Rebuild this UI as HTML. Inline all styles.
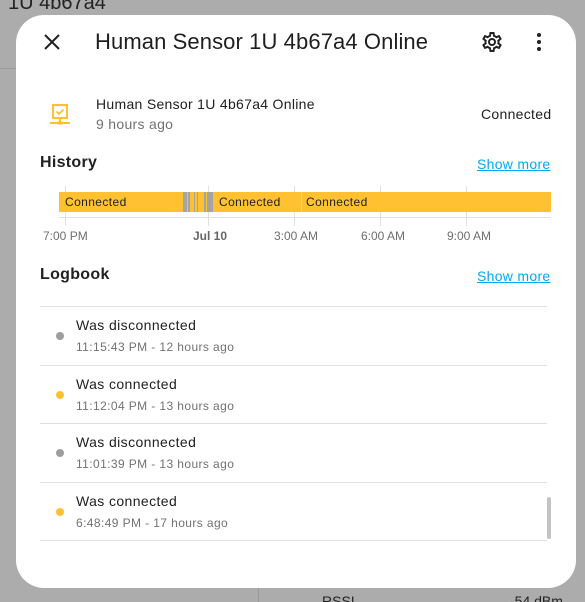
<!DOCTYPE html>
<html style="width:585px;height:602px;overflow:hidden"><head><meta charset="utf-8"><style>
*{margin:0;padding:0;box-sizing:border-box}
html,body{width:585px;height:602px;overflow:hidden}
body{background:#acacac;font-family:"Liberation Sans",sans-serif;position:relative;color:#1f1f1f}
.a{position:absolute;white-space:nowrap}
.dlg{position:absolute;left:16px;top:15px;width:560px;height:573px;background:#fff;border-radius:28px}
.line{position:absolute;left:40px;width:507px;height:1px;background:#e0e0e0}
.dot{position:absolute;left:56px;width:8px;height:8px;border-radius:50%}
.t1{font-size:14px;color:#212121;letter-spacing:.4px}
.t2{font-size:12px;color:#727272;letter-spacing:.4px}
.bar{position:absolute;top:192px;height:20px;background:#ffc032}
.g{position:absolute;top:192px;height:20px;background:#a4a4a4}
.bl{position:absolute;top:195px;font-size:12px;color:#222;letter-spacing:.4px}
.ax{position:absolute;top:229px;font-size:12px;color:#6e6e6e}
.tk{position:absolute;top:186px;width:1px;height:40px;background:#e0e0e0}
.clip{position:absolute;left:0;top:0;width:585px;height:602px;overflow:hidden}
</style></head><body><div class="clip">
<div class="a" style="left:8px;top:-8px;font-size:20px;color:#222">1U 4b67a4</div>
<div style="position:absolute;left:0;top:68px;width:16px;height:1px;background:#999"></div>
<div style="position:absolute;left:258px;top:588px;width:1px;height:14px;background:#999"></div>
<div class="a" style="left:322px;top:593px;font-size:14px;line-height:16px;color:#222">RSSI</div>
<div class="a" style="left:510px;top:593px;font-size:14px;line-height:16px;color:#222">-54 dBm</div>
<div class="dlg"></div>
<svg class="a" style="left:42px;top:32px" width="20" height="20" viewBox="0 0 20 20"><path d="M3 3L17 17M17 3L3 17" stroke="#222" stroke-width="2"/></svg>
<div class="a" style="left:95px;top:29px;font-size:22px;color:#1f1f1f;letter-spacing:.1px">Human Sensor 1U 4b67a4 Online</div>
<svg class="a" style="left:480px;top:30px" width="24" height="24" viewBox="0 0 24 24"><path fill="#222" d="M12,8A4,4 0 0,1 16,12A4,4 0 0,1 12,16A4,4 0 0,1 8,12A4,4 0 0,1 12,8M12,10A2,2 0 0,0 10,12A2,2 0 0,0 12,14A2,2 0 0,0 14,12A2,2 0 0,0 12,10M10,22C9.75,22 9.54,21.82 9.5,21.58L9.13,18.93C8.5,18.68 7.96,18.34 7.44,17.94L4.95,18.95C4.73,19.03 4.46,18.95 4.34,18.73L2.34,15.27C2.21,15.05 2.27,14.78 2.46,14.63L4.57,12.97L4.5,12L4.57,11L2.46,9.37C2.27,9.22 2.21,8.95 2.34,8.73L4.34,5.27C4.46,5.05 4.73,4.96 4.95,5.05L7.44,6.05C7.96,5.66 8.5,5.32 9.13,5.07L9.5,2.42C9.54,2.18 9.75,2 10,2H14C14.25,2 14.46,2.18 14.5,2.42L14.87,5.07C15.5,5.32 16.04,5.66 16.56,6.05L19.05,5.05C19.27,4.96 19.54,5.05 19.66,5.27L21.66,8.73C21.79,8.95 21.73,9.22 21.54,9.37L19.43,11L19.5,12L19.43,13L21.54,14.63C21.73,14.78 21.79,15.05 21.66,15.27L19.66,18.73C19.54,18.95 19.27,19.04 19.05,18.95L16.56,17.95C16.04,18.34 15.5,18.68 14.87,18.93L14.5,21.58C14.46,21.82 14.25,22 14,22H10M11.25,4L10.88,6.61C9.68,6.86 8.62,7.5 7.85,8.39L5.44,7.35L4.69,8.65L6.8,10.2C6.4,11.37 6.4,12.64 6.8,13.8L4.68,15.36L5.43,16.66L7.86,15.62C8.63,16.5 9.68,17.14 10.87,17.38L11.24,20H12.76L13.13,17.39C14.32,17.14 15.37,16.5 16.14,15.62L18.57,16.66L19.32,15.36L17.2,13.81C17.6,12.64 17.6,11.37 17.2,10.2L19.31,8.65L18.56,7.35L16.15,8.39C15.38,7.5 14.32,6.86 13.12,6.62L12.75,4H11.25Z"/></svg>
<svg class="a" style="left:535px;top:32px" width="8" height="20" viewBox="0 0 8 20"><circle cx="4" cy="3" r="2" fill="#222"/><circle cx="4" cy="10" r="2" fill="#222"/><circle cx="4" cy="17" r="2" fill="#222"/></svg>
<svg class="a" style="left:48px;top:103px" width="24" height="24" viewBox="0 0 24 24"><rect x="5" y="2" width="14" height="13" fill="none" stroke="#ffc032" stroke-width="2"/><path d="M8.5 8.5L11 11L15.5 6.5" stroke="#ffc032" stroke-width="1.8" fill="none"/><path d="M12 15V20M2 20H22" stroke="#ffc032" stroke-width="2"/><rect x="9.5" y="18.5" width="5" height="3" fill="#ffc032"/></svg>
<div class="a" style="left:96px;top:96px;font-size:14px;color:#212121;letter-spacing:.3px">Human Sensor 1U 4b67a4 Online</div>
<div class="a" style="left:96px;top:116px;font-size:14px;color:#727272;letter-spacing:.3px">9 hours ago</div>
<div class="a" style="left:481px;top:106px;font-size:14px;color:#212121;letter-spacing:.3px">Connected</div>
<div class="a" style="left:40px;top:154px;font-size:16px;font-weight:bold;color:#212121;letter-spacing:.3px">History</div>
<div class="a" style="left:477px;top:156px;font-size:14px;color:#03a9f4;text-decoration:underline;letter-spacing:.3px">Show more</div>
<div style="position:absolute;left:59px;top:217px;width:492px;height:1px;background:#e0e0e0"></div>
<div class="tk" style="left:65px"></div><div class="tk" style="left:208px"></div><div class="tk" style="left:294px"></div><div class="tk" style="left:380px"></div><div class="tk" style="left:466px"></div>
<div class="bar" style="left:59px;width:492px"></div>
<div class="g" style="left:183px;width:4px"></div><div class="g" style="left:188px;width:2px"></div><div class="g" style="left:194px;width:1px"></div><div class="g" style="left:197px;width:1px"></div><div class="g" style="left:204px;width:2px"></div><div class="g" style="left:207px;width:6px"></div>
<div style="position:absolute;left:301px;top:192px;width:1px;height:20px;background:#ffd77a"></div>
<div class="bl" style="left:65px">Connected</div><div class="bl" style="left:219px">Connected</div><div class="bl" style="left:306px">Connected</div>
<div class="ax" style="left:43px">7:00 PM</div>
<div class="ax" style="left:193px;font-weight:bold;color:#666">Jul 10</div>
<div class="ax" style="left:274px">3:00 AM</div>
<div class="ax" style="left:361px">6:00 AM</div>
<div class="ax" style="left:447px">9:00 AM</div>
<div class="a" style="left:40px;top:266px;font-size:16px;font-weight:bold;color:#212121;letter-spacing:.3px">Logbook</div>
<div class="a" style="left:477px;top:268px;font-size:14px;color:#03a9f4;text-decoration:underline;letter-spacing:.3px">Show more</div>
<div class="line" style="top:306px"></div><div class="line" style="top:365px"></div><div class="line" style="top:423px"></div><div class="line" style="top:482px"></div><div class="line" style="top:540px"></div>
<div class="dot" style="top:332px;background:#9e9e9e"></div>
<div class="a t1" style="left:76px;top:317px">Was disconnected</div><div class="a t2" style="left:76px;top:340px">11:15:43 PM - 12 hours ago</div>
<div class="dot" style="top:391px;background:#ffc032"></div>
<div class="a t1" style="left:76px;top:376px">Was connected</div><div class="a t2" style="left:76px;top:399px">11:12:04 PM - 13 hours ago</div>
<div class="dot" style="top:449px;background:#9e9e9e"></div>
<div class="a t1" style="left:76px;top:434px">Was disconnected</div><div class="a t2" style="left:76px;top:457px">11:01:39 PM - 13 hours ago</div>
<div class="dot" style="top:508px;background:#ffc032"></div>
<div class="a t1" style="left:76px;top:493px">Was connected</div><div class="a t2" style="left:76px;top:516px">6:48:49 PM - 17 hours ago</div>
<div style="position:absolute;left:547px;top:497px;width:4px;height:42px;background:#c4c4c4;border-radius:2px"></div>
</div></body></html>
